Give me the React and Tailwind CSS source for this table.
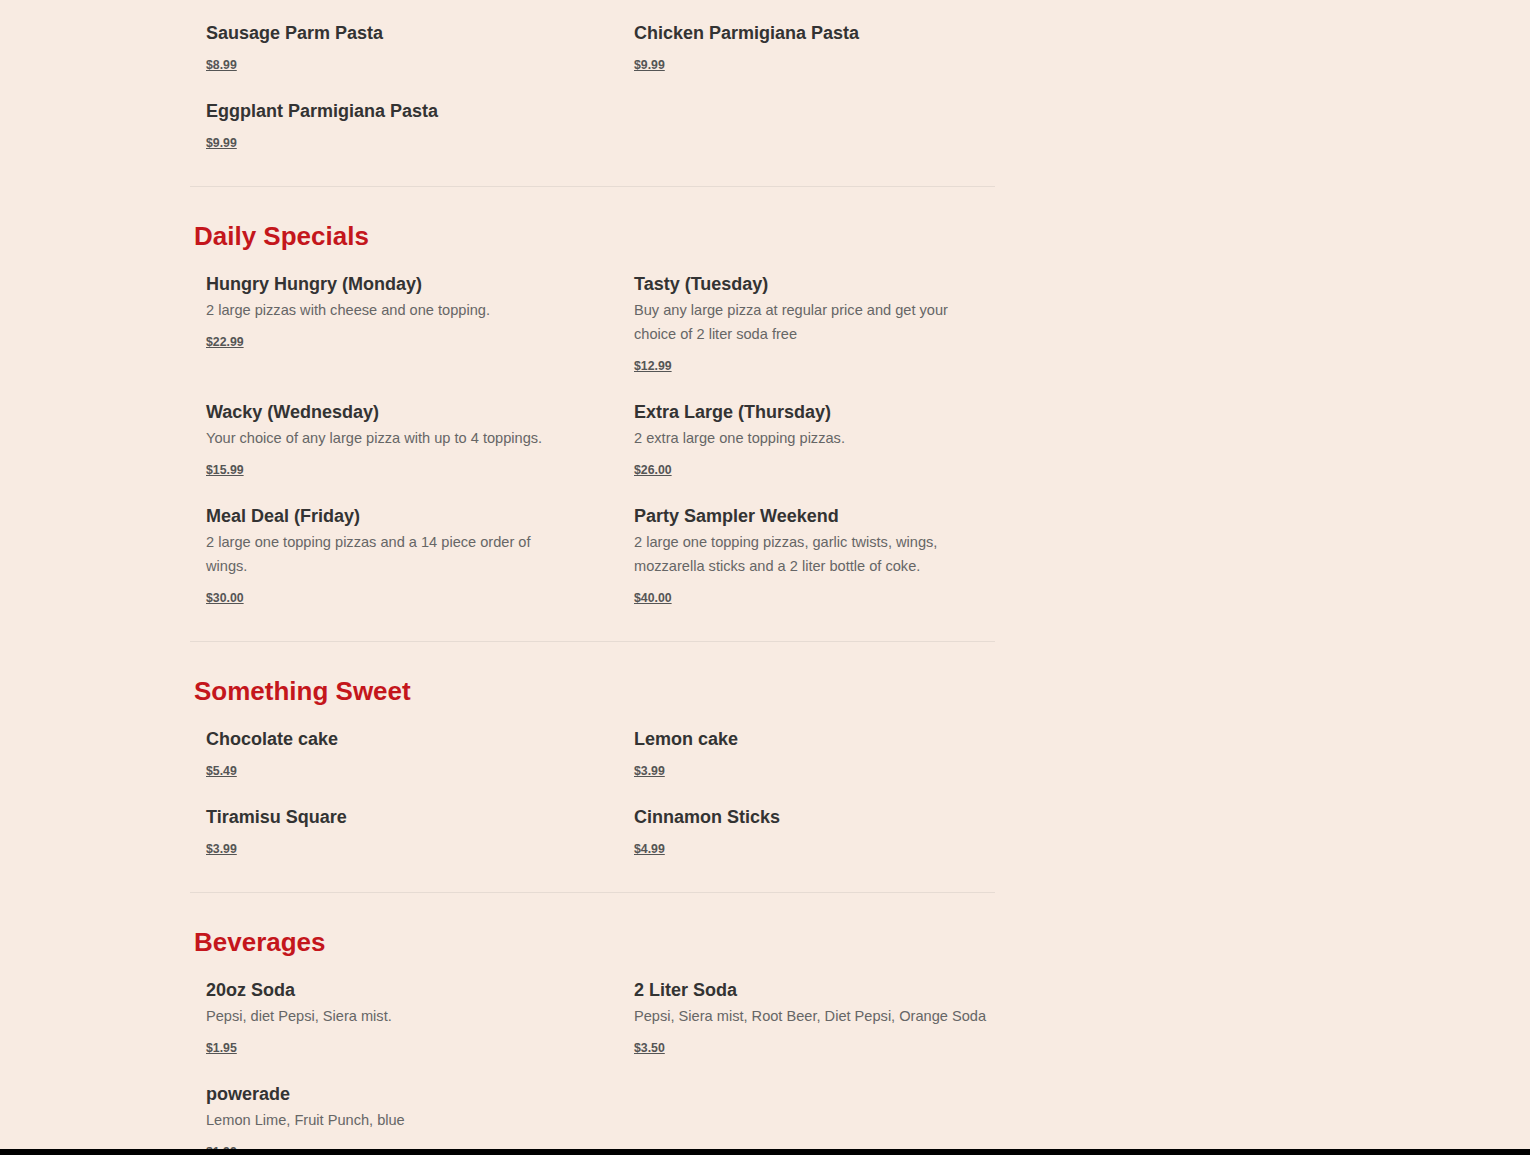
const sections = [
  {
    title: null,
    items: [
      { name: 'Sausage Parm Pasta', price: '$8.99' },
      { name: 'Chicken Parmigiana Pasta', price: '$9.99' },
      { name: 'Eggplant Parmigiana Pasta', price: '$9.99' },
    ],
  },
  {
    title: 'Daily Specials',
    items: [
      { name: 'Hungry Hungry (Monday)', desc: '2 large pizzas with cheese and one topping.', price: '$22.99' },
      { name: 'Tasty (Tuesday)', desc: 'Buy any large pizza at regular price and get your choice of 2 liter soda free', price: '$12.99' },
      { name: 'Wacky (Wednesday)', desc: 'Your choice of any large pizza with up to 4 toppings.', price: '$15.99' },
      { name: 'Extra Large (Thursday)', desc: '2 extra large one topping pizzas.', price: '$26.00' },
      { name: 'Meal Deal (Friday)', desc: '2 large one topping pizzas and a 14 piece order of wings.', price: '$30.00' },
      { name: 'Party Sampler Weekend', desc: '2 large one topping pizzas, garlic twists, wings, mozzarella sticks and a 2 liter bottle of coke.', price: '$40.00' },
    ],
  },
  {
    title: 'Something Sweet',
    items: [
      { name: 'Chocolate cake', price: '$5.49' },
      { name: 'Lemon cake', price: '$3.99' },
      { name: 'Tiramisu Square', price: '$3.99' },
      { name: 'Cinnamon Sticks', price: '$4.99' },
    ],
  },
  {
    title: 'Beverages',
    items: [
      { name: '20oz Soda', desc: 'Pepsi, diet Pepsi, Siera mist.', price: '$1.95' },
      { name: '2 Liter Soda', desc: 'Pepsi, Siera mist, Root Beer, Diet Pepsi, Orange Soda', price: '$3.50' },
      { name: 'powerade', desc: 'Lemon Lime, Fruit Punch, blue', price: '$1.99' },
    ],
  },
]

function MenuItem({ item }) {
  return (
    <div className="pl-4 w-[371px]">
      <h3 className="text-[18px] leading-6 font-bold text-[#333]">{item.name}</h3>
      {item.desc && (
        <p className="mt-[2px] text-[14.6px] leading-6 text-[#666]">{item.desc}</p>
      )}
      <a href="#" className="block mt-3 text-[12.3px] leading-4 font-bold text-[#555] underline">
        {item.price}
      </a>
    </div>
  )
}

export default function App() {
  return (
    <div className="min-h-screen w-full bg-[#f8ebe2] [font-family:'Liberation_Sans',Arial,sans-serif]">
      <div className="w-[805px] ml-[190px]">
        {sections.map((section, i) => (
          <section
            key={i}
            className={`border-b border-[#e6dbd3] pb-[35px] ${section.title ? 'pt-[33px]' : 'pt-[21px]'}`}
          >
            {section.title && (
              <h2 className="pl-1 mb-[20px] text-[26px] leading-8 font-bold text-[#c4161c]">
                {section.title}
              </h2>
            )}
            <div className="grid grid-cols-[428px_1fr] gap-y-[26px]">
              {section.items.map((item) => (
                <MenuItem key={item.name} item={item} />
              ))}
            </div>
          </section>
        ))}
      </div>
      <div className="fixed bottom-0 left-0 w-full h-[6px] bg-black" />
    </div>
  )
}
